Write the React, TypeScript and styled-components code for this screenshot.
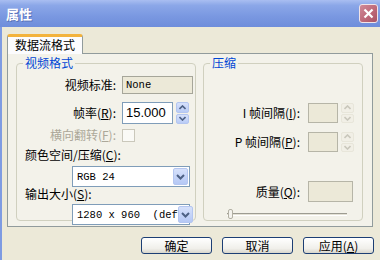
import React from 'react';
import styled, { createGlobalStyle } from 'styled-components';

const GlobalStyle = createGlobalStyle`
  html, body {
    margin: 0;
    padding: 0;
    background: #ECE9D8;
  }
  body {
    font-family: "Noto Sans CJK SC", sans-serif;
    font-size: 12px;
    color: #000;
  }
`;

const Window = styled.div`
  width: 380px;
  height: 260px;
  display: flex;
  flex-direction: column;
  overflow: hidden;
  background: #ECE9D8;
`;

const TitleBar = styled.div`
  height: 27px;
  flex: none;
  display: flex;
  align-items: center;
  justify-content: space-between;
  padding: 0 2px 0 6px;
  box-sizing: border-box;
  background: linear-gradient(#A9BEF1 0%, #8BA7E8 20%, #7A98E1 60%, #6E8DDB 100%);
`;

const Title = styled.span`
  color: #fff;
  font-weight: bold;
  font-size: 13px;
  text-shadow: 1px 1px 0 #5A72B8;
  line-height: 1;
`;

const CloseButton = styled.div`
  width: 19px;
  height: 19px;
  box-sizing: border-box;
  border: 1px solid #F2E4E8;
  border-radius: 3px;
  background: linear-gradient(135deg, #D08A98 0%, #BC6676 60%, #A85466 100%);
  display: flex;
  align-items: center;
  justify-content: center;
`;

const Body = styled.div`
  flex: 1;
  display: flex;
  flex-direction: column;
  border-left: 2px solid #7E9BE2;
  padding: 7px 6px 0 5px;
`;

const TabStrip = styled.div`
  display: flex;
  position: relative;
  z-index: 1;
  margin-bottom: -1px;
`;

const Tab = styled.div`
  width: 76px;
  height: 20px;
  box-sizing: border-box;
  border: 1px solid #919B9C;
  border-top: 3px solid #F3B33D;
  border-bottom: none;
  border-radius: 3px 3px 0 0;
  background: #FCFCFE;
  padding-left: 7px;
  line-height: 16px;
`;

const TabPanel = styled.div`
  width: 366px;
  height: 174px;
  box-sizing: border-box;
  border: 1px solid #919B9C;
  background: #F3F2EA;
  display: flex;
  gap: 7px;
  padding: 9px 0 0 8px;
`;

const Group = styled.div<{ $width: number }>`
  position: relative;
  width: ${(p) => p.$width}px;
  height: 158px;
  box-sizing: border-box;
  border: 1px solid #D0D0BF;
  border-radius: 4px;
  display: flex;
  flex-direction: column;
`;

const Legend = styled.span`
  position: absolute;
  top: -8px;
  left: 6px;
  padding: 0 2px;
  background: #F3F2EA;
  color: #0046D5;
  font-size: 12px;
  line-height: 14px;
`;

const FieldRow = styled.div<{ $top: number; $label: number }>`
  display: grid;
  grid-template-columns: ${(p) => p.$label}px auto;
  column-gap: ${(p) => (p.$label > 97 ? 6 : 8)}px;
  align-items: center;
  margin-top: ${(p) => p.$top}px;
`;

const Label = styled.span<{ $disabled?: boolean }>`
  text-align: right;
  white-space: nowrap;
  line-height: 14px;
  color: ${(p) => (p.$disabled ? '#ACA899' : '#000')};
`;

const PlainLabel = styled.div<{ $top: number }>`
  margin-top: ${(p) => p.$top}px;
  padding-left: 8px;
  line-height: 14px;
  white-space: nowrap;
`;

const ReadOnlyBox = styled.div`
  width: 71px;
  height: 18px;
  box-sizing: border-box;
  border: 1px solid #A6A69A;
  background: #ECE9D8;
  font-family: "Liberation Mono", monospace;
  font-size: 10.5px;
  line-height: 16px;
  padding-left: 3px;
`;

const Controls = styled.div`
  display: flex;
  align-items: center;
  gap: 3px;
`;

const TextInput = styled.div<{ $width: number; $height: number; $disabled?: boolean }>`
  width: ${(p) => p.$width}px;
  height: ${(p) => p.$height}px;
  box-sizing: border-box;
  border: 1px solid ${(p) => (p.$disabled ? '#B6B5A7' : '#7F9DB9')};
  background: ${(p) => (p.$disabled ? '#ECE9D8' : '#fff')};
  font-family: "Liberation Sans", sans-serif;
  font-size: 13px;
  line-height: ${(p) => p.$height - 2}px;
  padding-left: 3px;
`;

const Spinner = styled.div<{ $height: number }>`
  width: 13px;
  height: ${(p) => p.$height}px;
  display: flex;
  flex-direction: column;
  gap: 1px;
`;

const SpinHalf = styled.div<{ $disabled?: boolean }>`
  flex: 1;
  border-radius: 2px;
  box-sizing: border-box;
  border: 1px solid ${(p) => (p.$disabled ? '#E8E6DA' : '#B4C6F0')};
  background: ${(p) => (p.$disabled ? '#F1EFE6' : 'linear-gradient(#D6E1FB, #B9CCF6)')};
  display: flex;
  align-items: center;
  justify-content: center;
`;

const CheckBox = styled.div`
  width: 13px;
  height: 13px;
  box-sizing: border-box;
  border: 1px solid #CAC8BB;
  background: #FAFAF6;
`;

const Select = styled.div<{ $top: number }>`
  margin: ${(p) => p.$top}px 0 0 55px;
  width: 118px;
  height: 21px;
  box-sizing: border-box;
  border: 1px solid #7F9DB9;
  background: #fff;
  display: flex;
  align-items: center;
  justify-content: space-between;
  padding: 1px;
`;

const SelectText = styled.span`
  font-family: "Liberation Mono", monospace;
  font-size: 10.5px;
  padding-left: 3px;
  white-space: pre;
`;

const DropButton = styled.div`
  width: 15px;
  height: 17px;
  flex: none;
  border-radius: 2px;
  background: linear-gradient(#D6E1FB, #B5C8F5);
  border: 1px solid #B4C6F0;
  box-sizing: border-box;
  display: flex;
  align-items: center;
  justify-content: center;
`;

const SliderRow = styled.div`
  position: relative;
  margin: 9px 0 0 23px;
  width: 120px;
  height: 8px;
`;

const Track = styled.div`
  position: absolute;
  left: 0;
  right: 0;
  top: 2px;
  height: 3px;
  box-sizing: border-box;
  border-top: 1px solid #9D9C92;
  border-bottom: 1px solid #fff;
  background: #E4E2D6;
`;

const Thumb = styled.div`
  position: absolute;
  left: 1px;
  top: -2px;
  width: 5px;
  height: 10px;
  box-sizing: border-box;
  border: 1px solid #B2B0A4;
  border-radius: 2px;
  background: #F4F3EE;
`;

const ButtonBar = styled.div`
  display: flex;
  justify-content: flex-end;
  gap: 10px;
  margin-top: 10px;
`;

const Button = styled.div`
  width: 71px;
  height: 17px;
  box-sizing: border-box;
  border: 1px solid #1C3E74;
  border-radius: 3px;
  background: linear-gradient(#FFFFFF, #F0EFEA 70%, #D8D6CC);
  display: flex;
  align-items: center;
  justify-content: center;
  font-size: 12px;
  line-height: 1;
`;

const Chevron = ({ up, color }: { up?: boolean; color: string }) => (
  <svg width="7" height="5" viewBox="0 0 7 5">
    <polyline
      points={up ? '0.5,4 3.5,1 6.5,4' : '0.5,1 3.5,4 6.5,1'}
      fill="none"
      stroke={color}
      strokeWidth="1.6"
    />
  </svg>
);

const SpinBox = ({ disabled, height }: { disabled?: boolean; height: number }) => (
  <Spinner $height={height}>
    <SpinHalf $disabled={disabled}>
      <Chevron up color={disabled ? '#C9C7BC' : '#4D6185'} />
    </SpinHalf>
    <SpinHalf $disabled={disabled}>
      <Chevron color={disabled ? '#C9C7BC' : '#4D6185'} />
    </SpinHalf>
  </Spinner>
);

const Dropdown = ({ top, value }: { top: number; value: string }) => (
  <Select $top={top}>
    <SelectText>{value}</SelectText>
    <DropButton>
      <svg width="9" height="6" viewBox="0 0 9 6">
        <polyline points="1,1 4.5,4.5 8,1" fill="none" stroke="#4D6185" strokeWidth="2" />
      </svg>
    </DropButton>
  </Select>
);

export default function App() {
  return (
    <>
      <GlobalStyle />
      <Window>
        <TitleBar>
          <Title>属性</Title>
          <CloseButton>
            <svg width="11" height="11" viewBox="0 0 11 11">
              <path d="M1.5 1.5 L9.5 9.5 M9.5 1.5 L1.5 9.5" stroke="#fff" strokeWidth="2.2" />
            </svg>
          </CloseButton>
        </TitleBar>
        <Body>
          <TabStrip>
            <Tab>数据流格式</Tab>
          </TabStrip>
          <TabPanel>
            <Group $width={180}>
              <Legend>视频格式</Legend>
              <FieldRow $top={12} $label={99}>
                <Label>视频标准:</Label>
                <ReadOnlyBox>None</ReadOnlyBox>
              </FieldRow>
              <FieldRow $top={8} $label={99}>
                <Label>
                  帧率(<u>R</u>):
                </Label>
                <Controls>
                  <TextInput $width={51} $height={22}>15.000</TextInput>
                  <SpinBox height={22} />
                </Controls>
              </FieldRow>
              <FieldRow $top={4} $label={99}>
                <Label $disabled>
                  横向翻转(<u>F</u>):
                </Label>
                <CheckBox />
              </FieldRow>
              <PlainLabel $top={6}>
                颜色空间/压缩(<u>C</u>):
              </PlainLabel>
              <Dropdown top={4} value="RGB 24" />
              <PlainLabel $top={0}>
                输出大小(<u>S</u>):
              </PlainLabel>
              <Dropdown top={3} value="1280 x 960  (def" />
            </Group>
            <Group $width={160}>
              <Legend>压缩</Legend>
              <FieldRow $top={39} $label={96}>
                <Label>
                  I 帧间隔(<u>I</u>):
                </Label>
                <Controls>
                  <TextInput $width={30} $height={20} $disabled />
                  <SpinBox disabled height={20} />
                </Controls>
              </FieldRow>
              <FieldRow $top={9} $label={96}>
                <Label>
                  P 帧间隔(<u>P</u>):
                </Label>
                <Controls>
                  <TextInput $width={30} $height={20} $disabled />
                  <SpinBox disabled height={20} />
                </Controls>
              </FieldRow>
              <FieldRow $top={29} $label={96}>
                <Label>
                  质量(<u>Q</u>):
                </Label>
                <TextInput $width={45} $height={21} $disabled />
              </FieldRow>
              <SliderRow>
                <Track />
                <Thumb />
              </SliderRow>
            </Group>
          </TabPanel>
          <ButtonBar>
            <Button>确定</Button>
            <Button>取消</Button>
            <Button>
              应用(<u>A</u>)
            </Button>
          </ButtonBar>
        </Body>
      </Window>
    </>
  );
}
